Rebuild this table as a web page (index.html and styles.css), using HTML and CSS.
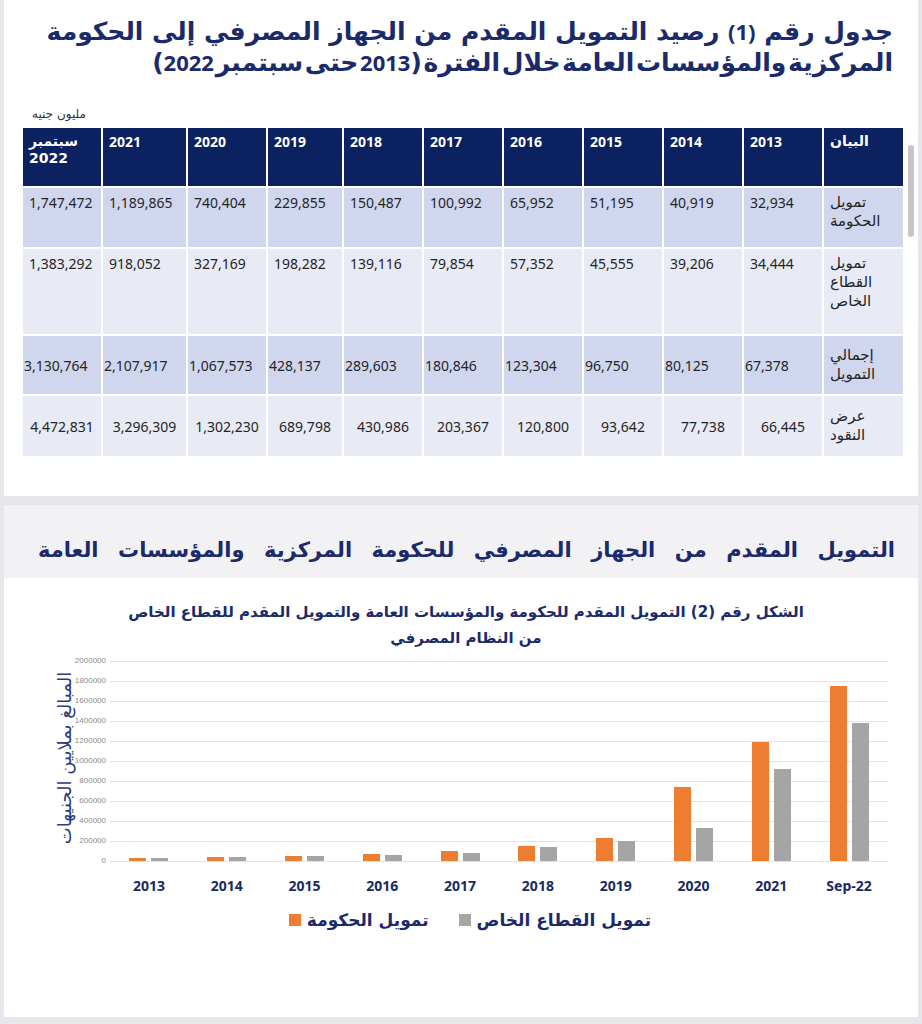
FILE: index.html
```html
<!DOCTYPE html>
<html lang="ar">
<head>
<meta charset="utf-8">
<title>التمويل المقدم من الجهاز المصرفي</title>
<link rel="stylesheet" href="styles.css">
</head>
<body>
<div class="page">
  <section class="card card-table">
    <h1 class="title" dir="rtl"><span class="t-line">جدول رقم <span class="num">(1)</span> رصيد التمويل المقدم من الجهاز المصرفي إلى الحكومة</span><span class="t-line t-line2">المركزية والمؤسسات العامة خلال الفترة (<span class="num">2013</span> حتى سبتمبر <span class="num">2022</span>)</span></h1>
    <div class="unit" dir="rtl">مليون جنيه</div>
    <div class="table-wrap">
      <table class="data" dir="rtl">
        <colgroup>
          <col class="c80"><col class="c80"><col class="c80"><col class="c80"><col class="c80"><col class="c80"><col class="c80"><col class="c76"><col class="c80"><col class="c85"><col class="c79">
        </colgroup>
        <thead>
          <tr class="r-head">
            <th>البيان</th><th>2013</th><th>2014</th><th>2015</th><th>2016</th><th>2017</th><th>2018</th><th>2019</th><th>2020</th><th>2021</th><th>سبتمبر<br>2022</th>
          </tr>
        </thead>
        <tbody>
          <tr class="r1">
            <td class="lbl">تمويل<br>الحكومة</td><td>32,934</td><td>40,919</td><td>51,195</td><td>65,952</td><td>100,992</td><td>150,487</td><td>229,855</td><td>740,404</td><td>1,189,865</td><td>1,747,472</td>
          </tr>
          <tr class="r2">
            <td class="lbl">تمويل<br>القطاع<br>الخاص</td><td>34,444</td><td>39,206</td><td>45,555</td><td>57,352</td><td>79,854</td><td>139,116</td><td>198,282</td><td>327,169</td><td>918,052</td><td>1,383,292</td>
          </tr>
          <tr class="r3">
            <td class="lbl">إجمالي<br>التمويل</td><td>67,378</td><td>80,125</td><td>96,750</td><td>123,304</td><td>180,846</td><td>289,603</td><td>428,137</td><td>1,067,573</td><td>2,107,917</td><td>3,130,764</td>
          </tr>
          <tr class="r4">
            <td class="lbl">عرض<br>النقود</td><td>66,445</td><td>77,738</td><td>93,642</td><td>120,800</td><td>203,367</td><td>430,986</td><td>689,798</td><td>1,302,230</td><td>3,296,309</td><td>4,472,831</td>
          </tr>
        </tbody>
      </table>
    </div>
    <div class="scrollbar"></div>
  </section>

  <section class="card card-chart">
    <div class="chart-head">
      <h2 class="chart-heading" dir="rtl">التمويل المقدم من الجهاز المصرفي للحكومة المركزية والمؤسسات العامة</h2>
    </div>
    <div class="chart-body">
      <div class="chart-title" dir="rtl">الشكل رقم (2) التمويل المقدم للحكومة والمؤسسات العامة والتمويل المقدم للقطاع الخاص<br>من النظام المصرفي</div>
      <div class="chart">
        <div class="y-title"><span dir="rtl">المبالغ بملايين الجنيهات</span></div>
        <div class="y-axis">
          <span>2000000</span><span>1800000</span><span>1600000</span><span>1400000</span><span>1200000</span><span>1000000</span><span>800000</span><span>600000</span><span>400000</span><span>200000</span><span>0</span>
        </div>
        <div class="plot-col">
          <div class="plot">
            <div class="group"><i class="bar gov" style="height:3.3px"></i><i class="bar pvt" style="height:3.4px"></i></div>
            <div class="group"><i class="bar gov" style="height:4.1px"></i><i class="bar pvt" style="height:3.9px"></i></div>
            <div class="group"><i class="bar gov" style="height:5.1px"></i><i class="bar pvt" style="height:4.6px"></i></div>
            <div class="group"><i class="bar gov" style="height:6.6px"></i><i class="bar pvt" style="height:5.7px"></i></div>
            <div class="group"><i class="bar gov" style="height:10.1px"></i><i class="bar pvt" style="height:8px"></i></div>
            <div class="group"><i class="bar gov" style="height:15px"></i><i class="bar pvt" style="height:13.9px"></i></div>
            <div class="group"><i class="bar gov" style="height:23px"></i><i class="bar pvt" style="height:19.8px"></i></div>
            <div class="group"><i class="bar gov" style="height:74px"></i><i class="bar pvt" style="height:32.7px"></i></div>
            <div class="group"><i class="bar gov" style="height:119px"></i><i class="bar pvt" style="height:91.8px"></i></div>
            <div class="group"><i class="bar gov" style="height:174.7px"></i><i class="bar pvt" style="height:138.3px"></i></div>
          </div>
          <div class="x-labels">
            <span>2013</span><span>2014</span><span>2015</span><span>2016</span><span>2017</span><span>2018</span><span>2019</span><span>2020</span><span>2021</span><span>Sep-22</span>
          </div>
        </div>
      </div>
      <div class="legend">
        <span class="key"><i class="sw gov"></i><span dir="rtl">تمويل الحكومة</span></span>
        <span class="key"><i class="sw pvt"></i><span dir="rtl">تمويل القطاع الخاص</span></span>
      </div>
    </div>
  </section>
</div>
</body>
</html>
```

FILE: styles.css
```css
* { box-sizing: border-box; }

html, body {
  margin: 0;
  padding: 0;
}

body {
  background: #e6e6eb;
  font-family: "Noto Sans", "DejaVu Sans", sans-serif;
  color: #222;
  width: 922px;
  height: 1024px;
  overflow: hidden;
}

.page {
  width: 914px;
  margin-left: 4px;
}

.card {
  background: #fff;
}

/* ---------- table card ---------- */
.card-table {
  position: relative;
  height: 496px;
  padding-top: 16px;
}

.title {
  margin: 0;
  padding: 0 25px 0 20px;
  font-family: "DejaVu Sans", sans-serif;
  font-weight: 700;
  font-size: 25px;
  line-height: 30px;
  color: #1b2a6b;
  text-align: right;
  white-space: nowrap;
}

.t-line {
  display: block;
}

.t-line2 {
  word-spacing: -7px;
}

.title .num {
  font-family: "Noto Sans", sans-serif;
  font-size: 22px;
}

.unit {
  margin-top: 29px;
  padding-left: 28px;
  font-family: "DejaVu Sans", sans-serif;
  font-size: 12px;
  line-height: 14px;
  color: #333;
  text-align: left;
}

.table-wrap {
  margin-top: 7px;
  margin-left: 19px;
  width: 880px;
}

.data {
  border-collapse: collapse;
  table-layout: fixed;
  width: 880px;
  font-size: 14px;
  line-height: 19px;
  color: #252525;
}

.c80 { width: 80px; }
.c76 { width: 76px; }
.c85 { width: 85px; }
.c79 { width: 79px; }

.data th,
.data td {
  border: 2px solid #fff;
  text-align: left;
  padding: 0 4px 0 6px;
  overflow: visible;
  white-space: nowrap;
}

.data td.lbl {
  font-family: "DejaVu Sans", sans-serif;
  font-size: 15px;
}

.data tr:first-child th { border-top: 0; }
.data th:first-child, .data td:first-child { border-right: 0; }
.data th:last-child, .data td:last-child { border-left: 0; }
.data tbody tr:last-child td { border-bottom: 0; }

.r-head th {
  height: 59px;
  background: #0c2160;
  color: #fff;
  font-weight: 700;
  font-size: 14px;
  line-height: 17px;
  vertical-align: top;
  padding-top: 5px;
}

.r-head th:first-child,
.r-head th:last-child {
  font-family: "DejaVu Sans", sans-serif;
}

.r1 td, .r3 td { background: #d0d6ee; }
.r2 td, .r4 td { background: #e8eaf6; }

.r1 td { height: 61px; vertical-align: top; padding-top: 5px; }
.r2 td { height: 87px; vertical-align: top; padding-top: 5px; }
.r3 td { height: 60px; vertical-align: middle; padding-left: 1px; }
.r4 td { height: 61px; vertical-align: middle; text-align: center; padding: 0; }
.r3 td.lbl, .r4 td.lbl { padding-left: 6px; text-align: left; }

.scrollbar {
  position: absolute;
  left: 904px;
  top: 145px;
  width: 6px;
  height: 92px;
  border-radius: 3px;
  background: #c6c6c6;
}

/* ---------- chart card ---------- */
.card-chart {
  margin-top: 9px;
  height: 512px;
}

.chart-head {
  height: 73px;
  background: #f2f2f5;
  padding: 0 23px 0 34px;
  display: flex;
  align-items: center;
  padding-top: 16px;
}

.chart-heading {
  margin: 0;
  width: 100%;
  font-family: "DejaVu Sans", sans-serif;
  font-weight: 700;
  font-size: 21px;
  line-height: 26px;
  color: #1b2a6b;
  text-align: justify;
  text-align-last: justify;
}

.chart-body {
  padding-top: 21px;
}

.chart-title {
  font-family: "DejaVu Sans", sans-serif;
  font-weight: 700;
  font-size: 15px;
  line-height: 26px;
  color: #1b2a6b;
  text-align: center;
  padding-left: 10px;
}

.chart {
  display: flex;
  margin-top: 5px;
}

.y-title {
  width: 58px;
  height: 210px;
  position: relative;
}

.y-title span {
  position: absolute;
  left: 60px;
  top: 102px;
  transform: translate(-50%, -50%) rotate(-90deg);
  white-space: nowrap;
  font-family: "DejaVu Sans", sans-serif;
  font-size: 18px;
  color: #2c3c7c;
}

.y-axis {
  width: 44px;
  height: 210px;
  display: flex;
  flex-direction: column;
  justify-content: space-between;
  align-items: flex-end;
}

.y-axis span {
  font-family: "Liberation Sans", sans-serif;
  font-size: 8px;
  line-height: 10px;
  color: #8a8a8a;
}

.plot-col {
  width: 778px;
  margin-left: 4px;
  padding-top: 5px;
}

.plot {
  height: 201px;
  display: flex;
  align-items: flex-end;
  background: repeating-linear-gradient(to bottom, #e3e3e3 0, #e3e3e3 1px, transparent 1px, transparent 20px);
}

.group {
  flex: 1;
  display: flex;
  justify-content: center;
  align-items: flex-end;
  gap: 5px;
  padding-bottom: 1px;
}

.bar {
  display: block;
  width: 17px;
}

.gov { background: #ed7d31; }
.pvt { background: #a5a5a5; }

.x-labels {
  display: flex;
  margin-top: 15px;
}

.x-labels span {
  flex: 1;
  text-align: center;
  font-family: "Noto Sans", sans-serif;
  font-weight: 700;
  font-size: 14px;
  line-height: 18px;
  color: #1b2a5e;
}

.legend {
  display: flex;
  justify-content: center;
  gap: 30px;
  margin-top: 14px;
  padding-left: 18px;
}

.key {
  display: flex;
  align-items: center;
  gap: 6px;
  font-family: "DejaVu Sans", sans-serif;
  font-weight: 700;
  font-size: 17px;
  line-height: 22px;
  color: #1b2a6b;
}

.sw {
  display: block;
  width: 12px;
  height: 12px;
}
```
